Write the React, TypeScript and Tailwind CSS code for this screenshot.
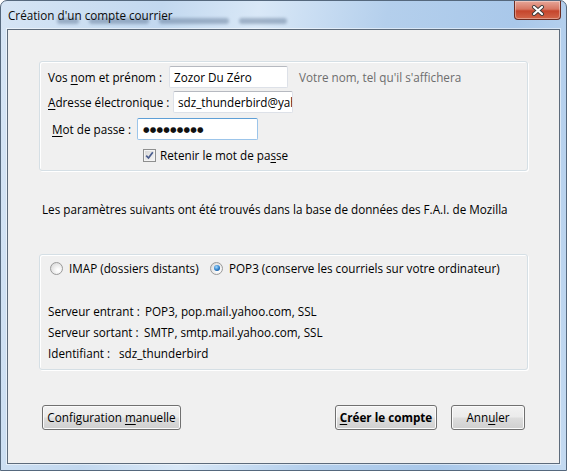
import React from "react";

/**
 * Assistant de création de compte courrier (style Windows 7)
 */

function Checkbox({ checked }: { checked?: boolean }) {
  return (
    <span className="w-[13px] h-[13px] shrink-0 border border-[#8e8f8f] bg-[linear-gradient(135deg,#d6d6d6,#f6f6f6)] flex items-center justify-center shadow-[inset_0_0_0_1px_#f4f4f4]">
      {checked && (
        <svg width="9" height="9" viewBox="0 0 9 9">
          <path d="M1.2 4.6 L3.5 7 L7.8 1.3" fill="none" stroke="#4a5d8e" strokeWidth="1.7" />
        </svg>
      )}
    </span>
  );
}

function Radio({ checked }: { checked?: boolean }) {
  return (
    <span className="w-[13px] h-[13px] shrink-0 rounded-full border border-[#9a9a9a] bg-[radial-gradient(circle_at_65%_65%,#ffffff_10%,#d2d2d2_100%)] flex items-center justify-center">
      {checked && (
        <span className="w-[6px] h-[6px] rounded-full bg-[radial-gradient(circle_at_40%_35%,#a6dcff_0%,#2a7cc8_55%,#0d3f7a_100%)]" />
      )}
    </span>
  );
}

function Field({
  width,
  pad,
  focused,
  children,
}: {
  width: string;
  pad: string;
  focused?: boolean;
  children: React.ReactNode;
}) {
  return (
    <div
      className={
        "h-[22px] bg-white rounded-[2px] flex items-center overflow-hidden whitespace-nowrap border " +
        width +
        " " +
        pad +
        " " +
        (focused
          ? "border-[#9cc5ea] border-t-[#5e9fd6]"
          : "border-[#dde1e8] border-t-[#b6b9c0]")
      }
    >
      {children}
    </div>
  );
}

function Button({
  width,
  children,
  bold,
}: {
  width: string;
  children: React.ReactNode;
  bold?: boolean;
}) {
  return (
    <div
      className={
        "h-[25px] flex items-center justify-center rounded-[3px] border border-[#707070] bg-[linear-gradient(#f2f2f2_0%,#ebebeb_48%,#dddddd_52%,#cfcfcf_100%)] shadow-[inset_0_0_0_1px_#fbfbfb] " +
        width +
        (bold ? " font-bold" : "")
      }
    >
      <span className="whitespace-pre">{children}</span>
    </div>
  );
}

const u = "underline underline-offset-[2px] decoration-[1px]";

export default function App() {
  return (
    <div className="w-[567px] h-[471px] bg-white font-['Open_Sans',sans-serif] text-[11.7px] leading-[15px] text-black">
      <div className="w-full h-full flex flex-col rounded-t-[7px] border border-[#55687d] bg-[linear-gradient(100deg,#d6e5f5_0%,#c2d8ef_25%,#d9e8f7_40%,#b4cfec_60%,#a9c8ea_80%,#c4daf1_100%)]">
        {/* Barre de titre */}
        <div className="h-[28px] flex items-start justify-between relative">
          {/* reflets flous derrière le verre */}
          <div className="absolute left-[56px] top-[17px] flex gap-[10px] opacity-40 blur-[1.5px]">
            <span className="w-[22px] h-[6px] rounded-full bg-[#4a6282]" />
            <span className="w-[60px] h-[6px] rounded-full bg-[#4a6282]" />
            <span className="w-[70px] h-[6px] rounded-full bg-[#4a6282]" />
            <span className="w-[48px] h-[6px] rounded-full bg-[#4a6282]" />
          </div>
          <span className="relative mt-[7px] ml-[7px] text-[#0b0b0b]">
            Création d'un compte courrier
          </span>
          <div className="mr-[5px] w-[47px] h-[19px] rounded-b-[4px] border border-t-0 border-[#6b2c22] bg-[linear-gradient(#e6a698_0%,#d77763_45%,#c5452c_55%,#d2664a_100%)] shadow-[inset_0_0_0_1px_rgba(255,255,255,0.35)] flex items-center justify-center">
            <svg width="14" height="11" viewBox="0 0 14 11">
              <path d="M3 2 L11 9 M11 2 L3 9" stroke="#3a3a3a" strokeWidth="4" strokeLinecap="round" />
              <path d="M3 2 L11 9 M11 2 L3 9" stroke="#ffffff" strokeWidth="2.2" strokeLinecap="round" />
            </svg>
          </div>
        </div>

        {/* Zone cliente */}
        <div className="flex-1 flex px-[6px] pb-[6px]">
          <div className="flex-1 flex flex-col border border-[#5d6b7b] bg-[#f0f0f0] shadow-[0_0_0_1px_rgba(255,255,255,0.5)]">
            {/* Identité */}
            <div className="mt-[31px] mx-[31px] pt-[4px] pb-[7px] rounded-[3px] border border-[#d5dfe5] shadow-[inset_1px_1px_0_#ffffff,1px_1px_0_#ffffff] flex flex-col">
              <div className="h-[22px] flex items-center">
                <span className="ml-[8px] w-[121px]">
                  Vos <span className={u}>n</span>om et prénom :
                </span>
                <Field width="w-[119px]" pad="pl-[4px]">
                  Zozor Du Zéro
                </Field>
                <span className="ml-[11px] text-[#6d6d6d]">Votre nom, tel qu'il s'affichera</span>
              </div>
              <div className="mt-[3px] h-[22px] flex items-center">
                <span className="ml-[8px] w-[125px]">
                  <span className={u}>A</span>dresse électronique :
                </span>
                <Field width="w-[120px]" pad="pl-[4px]">
                  sdz_thunderbird@yah
                </Field>
              </div>
              <div className="mt-[5px] h-[22px] flex items-center">
                <span className="ml-[12px] w-[85px]">
                  <span className={u}>M</span>ot de passe :
                </span>
                <Field width="w-[121px]" pad="pl-[5px]" focused>
                  <span className="font-['DejaVu_Sans',sans-serif] text-[7.5px] tracking-[0.2px] text-[#111]">
                    ●●●●●●●●●
                  </span>
                </Field>
              </div>
              <div className="mt-[7px] h-[16px] flex items-center">
                <span className="ml-[103px]">
                  <Checkbox checked />
                </span>
                <span className="ml-[4px]">
                  Retenir le mot de pa<span className={u}>s</span>se
                </span>
              </div>
            </div>

            <p className="mt-[31px] ml-[34px]">
              Les paramètres suivants ont été trouvés dans la base de données des F.A.I. de Mozilla
            </p>

            {/* Serveurs */}
            <div className="mt-[37px] mx-[31px] pt-[5px] pb-[5px] rounded-[3px] border border-[#d5dfe5] shadow-[inset_1px_1px_0_#ffffff,1px_1px_0_#ffffff] flex flex-col">
              <div className="h-[16px] flex items-center">
                <div className="ml-[10px] w-[160px] flex items-center">
                  <Radio />
                  <span className="ml-[6px]">IMAP (dossiers distants)</span>
                </div>
                <Radio checked />
                <span className="ml-[6px]">POP3 (conserve les courriels sur votre ordinateur)</span>
              </div>
              <div className="mt-[25px] h-[21px] flex items-center">
                <span className="ml-[8px] w-[97px]">Serveur entrant :</span>
                <span>POP3, pop.mail.yahoo.com, SSL</span>
              </div>
              <div className="h-[21px] flex items-center">
                <span className="ml-[8px] w-[96px]">Serveur sortant :</span>
                <span>SMTP, smtp.mail.yahoo.com, SSL</span>
              </div>
              <div className="h-[21px] flex items-center">
                <span className="ml-[8px] w-[71px]">Identifiant :</span>
                <span>sdz_thunderbird</span>
              </div>
            </div>

            {/* Boutons */}
            <div className="mt-[35px] mx-[34px] flex items-center">
              <Button width="w-[139px]">
                Configuration <span className={u}>m</span>anuelle
              </Button>
              <div className="flex-1" />
              <Button width="w-[102px]" bold>
                <span className={u}>C</span>réer le compte
              </Button>
              <div className="ml-[14px]">
                <Button width="w-[74px]">
                  Ann<span className={u}>u</span>ler
                </Button>
              </div>
            </div>
          </div>
        </div>
      </div>
    </div>
  );
}
